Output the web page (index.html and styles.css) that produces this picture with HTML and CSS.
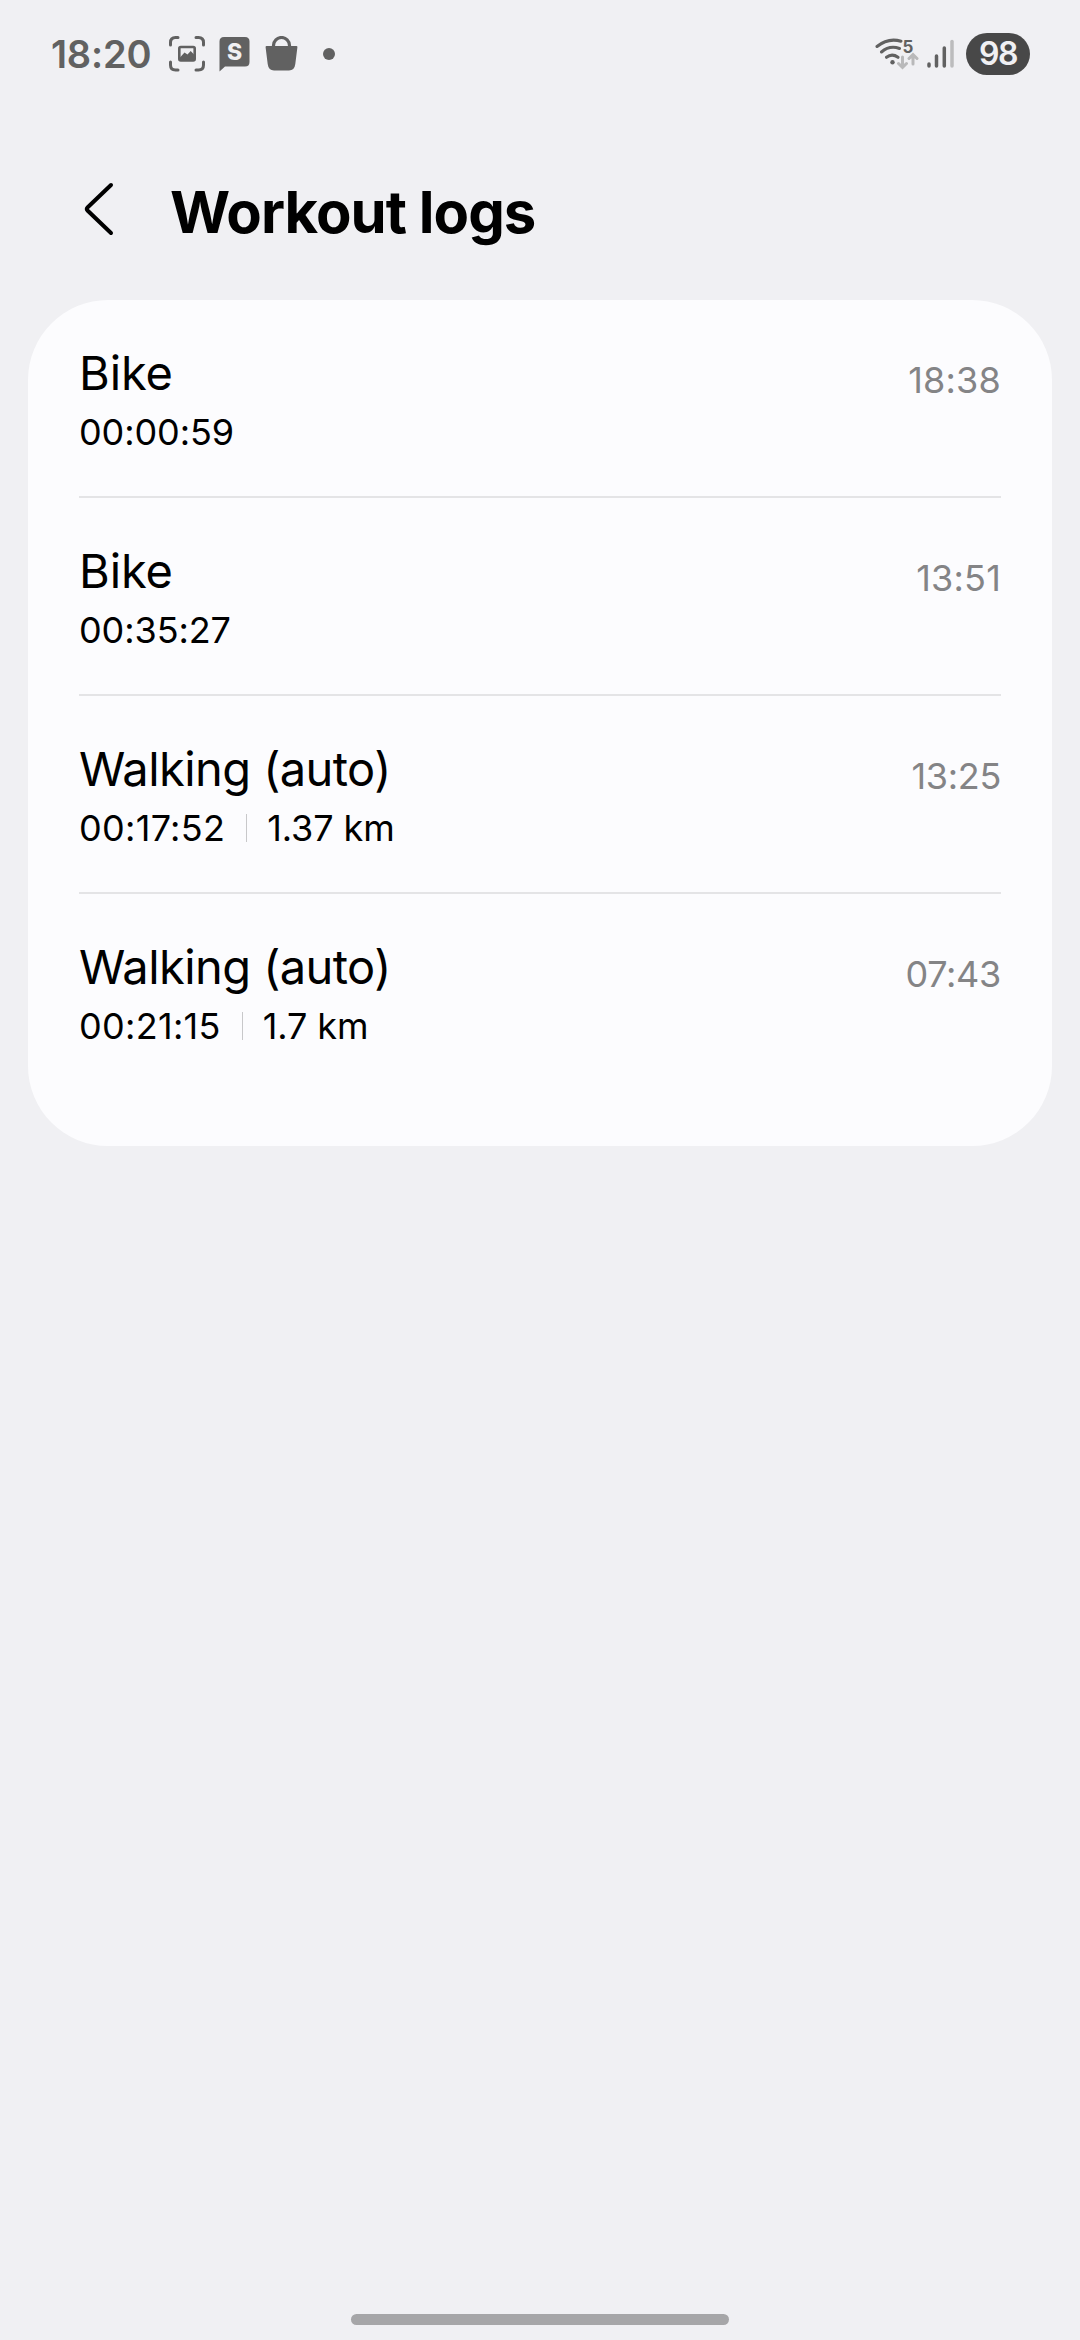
FILE: index.html
```html
<!DOCTYPE html>
<html lang="en">
<head>
<meta charset="utf-8">
<title>Workout logs</title>
<link rel="stylesheet" href="styles.css">
</head>
<body>
<div class="screen">
  <div class="status">
    <span class="clock">18:20</span>
    <svg class="icon-capture" width="36" height="36" viewBox="0 0 36 36" fill="none" stroke="#616161" stroke-width="3" stroke-linecap="round">
      <path d="M1.5 9V6.500Q1.500 1.500 6.500 1.500H9M27 1.500h2.500q5 0 5 5V9M34.500 26v3q0 5-5 5H27M9 34H6.500q-5 0-5-5v-3"/>
      <rect x="10.300" y="11" width="15.400" height="13.500" rx="1.500" stroke-width="2.600"/>
      <path d="M10.500 22l5-5.500 3 2 3.200-3.500 3.800 4v5h-15z" fill="#616161" stroke="none"/>
    </svg>
    <svg class="icon-bubble" width="31" height="36" viewBox="0 0 31 36">
      <path d="M5 1h21q4.500 0 4.500 4.500v20.500q0 4.500-4.500 4.500H6L.5 35.500V5.500Q.5 1 5 1z" fill="#616161"/>
      <text class="bubble-letter" x="15.500" y="24" text-anchor="middle">S</text>
    </svg>
    <svg class="icon-bag" width="33" height="36" viewBox="0 0 33 36">
      <path d="M8.500 11.500V9.500a8 8 0 0 1 16 0v2" fill="none" stroke="#616161" stroke-width="3.200"/>
      <path d="M1.500 10h30q1 0 .9 1.200L30.300 28q-.8 6.500-6.300 6.500H9Q3.500 34.500 2.700 28L.6 11.200Q.5 10 1.500 10z" fill="#616161"/>
    </svg>
    <span class="more-dot"></span>
    <span class="spacer"></span>
    <svg class="icon-wifi" width="44" height="34" viewBox="0 0 44 34" fill="none" stroke="#616161" stroke-width="3" stroke-linecap="round">
      <path d="M2 9.500Q13 .5 26 4.200M6.500 15Q14.500 8 24.500 11.500M11.500 20.300Q17 16 23 20.300"/>
      <circle cx="17.500" cy="25.200" r="2.200" fill="#616161" stroke="none"/>
      <text class="wifi-band" x="27.600" y="15.500">5</text>
      <path d="M27.500 20v10M23.500 26.500l4 4 4-4M38 27V18M34 21.500l4-4 4 4" stroke="#b9b9ba"/>
    </svg>
    <svg class="icon-signal" width="28" height="30" viewBox="0 0 28 30" fill="none" stroke="#616161" stroke-width="3.500" stroke-linecap="round">
      <path d="M2 25v2M9.500 17v10M17.300 9v18"/>
      <path d="M25 2.500V27" stroke="#bcbcbd"/>
    </svg>
    <span class="battery"><span class="battery-level">98</span></span>
  </div>

  <header class="header">
    <svg class="back" width="30" height="56" viewBox="0 0 30 56" fill="none" stroke="#000" stroke-width="4" stroke-linecap="round" stroke-linejoin="round">
      <path d="M27 4L3.500 26.500Q2 28 3.500 29.500L27 52"/>
    </svg>
    <h1 class="title">Workout logs</h1>
  </header>

  <main class="card">
    <section class="row">
      <div class="info">
        <span class="name">Bike</span>
        <div class="stats"><span class="stat">00:00:59</span></div>
      </div>
      <time class="time wide">18:38</time>
    </section>
    <section class="row">
      <div class="info">
        <span class="name">Bike</span>
        <div class="stats"><span class="stat">00:35:27</span></div>
      </div>
      <time class="time wide">13:51</time>
    </section>
    <section class="row">
      <div class="info">
        <span class="name walking">Walking (auto)</span>
        <div class="stats"><span class="stat wide">00:17:52</span><span class="bar"></span><span class="stat">1.37 km</span></div>
      </div>
      <time class="time">13:25</time>
    </section>
    <section class="row">
      <div class="info">
        <span class="name walking">Walking (auto)</span>
        <div class="stats"><span class="stat wide">00:21:15</span><span class="bar"></span><span class="stat">1.7 km</span></div>
      </div>
      <time class="time">07:43</time>
    </section>
  </main>

  <div class="home"></div>
</div>
</body>
</html>
```
FILE: styles.css
```css
* { box-sizing: border-box; }
body { margin: 0; font-family: Inter, "Liberation Sans", sans-serif; background: #f0f0f3; color: #000; }
.screen { width: 1080px; height: 2340px; display: flex; flex-direction: column; overflow: hidden; }

.status { height: 108px; display: flex; align-items: center; padding: 0 50px 0 51px; color: #616161; }
.clock { width: 118px; font-size: 38px; font-weight: 600; line-height: 40px; letter-spacing: -0.2px; white-space: nowrap; }
.icon-bubble { margin-left: 14px; }
.icon-bag { margin-left: 15px; }
.bubble-letter { font-size: 23px; font-weight: 800; fill: #f0f0f3; }
.more-dot { width: 12px; height: 12px; margin-left: 25px; border-radius: 50%; background: #616161; }
.spacer { flex: 1; }
.wifi-band { font-size: 17px; font-weight: 700; fill: #616161; stroke: none; }
.icon-signal { margin-left: 8px; }
.battery { width: 64px; height: 42px; margin-left: 11px; border-radius: 21px; background: #484848; color: #f0f0f3; display: flex; align-items: center; justify-content: center; }
.battery-level { font-size: 32px; font-weight: 600; line-height: 42px; letter-spacing: -1.5px; }

.header { height: 192px; display: flex; align-items: center; padding: 15px 0 0 84px; }
.back { margin-top: -5px; }
.title { margin: 0 0 0 56px; font-size: 58px; font-weight: 700; line-height: 70px; letter-spacing: -0.95px; white-space: nowrap; }

.card { width: 1024px; height: 846px; margin-left: 28px; padding: 0 51px; border-radius: 80px; background: #fcfcfe; }
.row { height: 198px; display: flex; justify-content: space-between; border-bottom: 2px solid #e4e4e6; }
.row:last-child { border-bottom: 0; }
.info { display: flex; flex-direction: column; padding-top: 43px; }
.name { font-size: 47px; line-height: 60px; letter-spacing: -0.1px; white-space: nowrap; }
.walking { letter-spacing: -0.57px; }
.stats { display: flex; align-items: center; height: 58px; }
.stat { font-size: 36px; line-height: 44px; letter-spacing: -0.1px; white-space: nowrap; }
.stat.wide { letter-spacing: 0.3px; }
.bar { width: 1px; height: 28px; margin: 0 20px 0 21px; background: #c8c8ca; }
.time { padding-top: 58px; font-size: 36px; line-height: 44px; letter-spacing: -0.3px; color: #848486; }
.time.wide { letter-spacing: 0.2px; }

.home { width: 378px; height: 11px; margin: auto auto 15px; border-radius: 6px; background: #a6a6a8; }
```
